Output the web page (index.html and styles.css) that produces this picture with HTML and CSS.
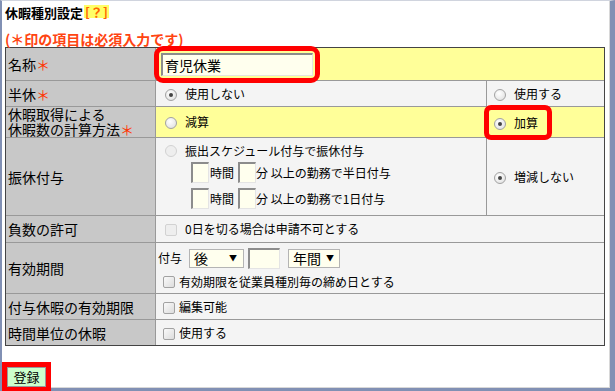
FILE: index.html
```html
<!DOCTYPE html>
<html lang="ja">
<head>
  <meta charset="UTF-8">
  <title>休暇種別設定</title>
  <link rel="stylesheet" href="styles.css">
</head>
<body>
  <div class="window">
    <h1 class="title">休暇種別設定<span class="help">[？]</span></h1>
    <p class="note">(＊印の項目は必須入力です)</p>

    <table class="form">
      <colgroup>
        <col class="c-label">
        <col class="c-main">
        <col class="c-side">
      </colgroup>
      <tr class="r-name hl">
        <th>名称<span class="req">＊</span></th>
        <td colspan="2" class="name-cell"><span class="mark-input"><input type="text" class="text name" value="育児休業"></span></td>
      </tr>
      <tr class="r-half">
        <th>半休<span class="req">＊</span></th>
        <td class="main"><span class="radio on"></span>使用しない</td>
        <td class="side"><span class="radio"></span>使用する</td>
      </tr>
      <tr class="r-calc hl">
        <th class="two">休暇取得による<br>休暇数の計算方法<span class="req">＊</span></th>
        <td class="main"><span class="radio"></span>減算</td>
        <td class="side mark-cell"><span class="mark"><span class="radio on"></span>加算</span></td>
      </tr>
      <tr class="r-sub">
        <th>振休付与</th>
        <td class="main">
          <div class="line first"><span class="radio off"></span>振出スケジュール付与で振休付与</div>
          <div class="line indent"><input type="text" class="text tiny"><span class="unit">時間</span><input type="text" class="text tiny"><span>分 以上の勤務で半日付与</span></div>
          <div class="line indent"><input type="text" class="text tiny"><span class="unit">時間</span><input type="text" class="text tiny"><span>分 以上の勤務で1日付与</span></div>
        </td>
        <td class="side"><span class="radio on"></span>増減しない</td>
      </tr>
      <tr class="r-neg">
        <th>負数の許可</th>
        <td colspan="2" class="main"><span class="check off"></span>0日を切る場合は申請不可とする</td>
      </tr>
      <tr class="r-term">
        <th>有効期間</th>
        <td colspan="2" class="wide">
          <div class="line">付与<span class="select s-after">後<i>▼</i></span><input type="text" class="text num"><span class="select s-unit">年間<i>▼</i></span></div>
          <div class="line second"><span class="check"></span>有効期限を従業員種別毎の締め日とする</div>
        </td>
      </tr>
      <tr class="r-edit">
        <th>付与休暇の有効期限</th>
        <td colspan="2" class="wide"><span class="check"></span>編集可能</td>
      </tr>
      <tr class="r-hour">
        <th>時間単位の休暇</th>
        <td colspan="2" class="wide"><span class="check"></span>使用する</td>
      </tr>
    </table>

    <div class="actions">
      <button type="button" class="submit">登録</button>
    </div>
  </div>
</body>
</html>
```

FILE: styles.css
```css
/* 休暇種別設定 */
body {
  margin: 0;
  font-family: "Noto Sans CJK JP", "Noto Sans", sans-serif;
  color: #000;
}

.window {
  box-sizing: border-box;
  width: 615px;
  height: 391px;
  padding: 4px 0 0 3px;
  background: #fff;
  border-top: 1px solid #d0d4de;
  border-left: 2px solid #8190b4;
  border-right: 5px solid #8190b4;
  border-bottom: 3px solid #8190b4;
  box-shadow: inset -1px -1px 0 #d8d8d8;
}

.title {
  margin: 0;
  font-size: 13px;
  line-height: 16px;
  font-weight: bold;
}

.help {
  display: inline-block;
  margin-left: 1px;
  padding: 0 1px;
  background: #ffff66;
  color: #ff6600;
  font-size: 13px;
  line-height: 13px;
  vertical-align: 1px;
}

.note {
  margin: 10px 0 0;
  font-size: 14px;
  line-height: 16px;
  font-weight: bold;
  color: #ff4411;
}

.req {
  color: #ff3300;
}

/* 表 */
.form {
  width: 600px;
  table-layout: fixed;
  border-collapse: separate;
  border-spacing: 0;
  border: 1px solid #444;
}

.c-label { width: 150px; }
.c-main { width: 331px; }

.form th,
.form td {
  padding: 0;
  border-right: 1px solid #999;
  border-bottom: 1px solid #999;
}

.form tr > :last-child { border-right: 0; }
.form tr:last-child > * { border-bottom: 0; }

.form th {
  padding-left: 2px;
  background: #c8c8c8;
  font-size: 14px;
  font-weight: normal;
  line-height: 16px;
  text-align: left;
}

.form th.two { line-height: 15px; }

.form td {
  background: #f4f4f4;
  font-size: 12px;
  line-height: 14px;
}

.form tr.hl td { background: #ffff99; }

.r-name { height: 33px; }
.r-half { height: 26px; }
.r-calc { height: 31px; }
.r-sub { height: 78px; }
.r-neg { height: 27px; }
.r-term { height: 51px; }
.r-edit { height: 26px; }
.r-hour { height: 25px; }

td.main { padding-left: 9px; }
td.side { padding-left: 7px; }
td.wide { padding-left: 2px; }
td.name-cell { padding-left: 5px; }
td.mark-cell { padding-left: 2px; }

.line {
  display: flex;
  align-items: center;
}

.line.first { height: 14px; margin-bottom: 4px; }
.line.indent { padding-left: 26px; margin-bottom: 5px; }
.line.indent:last-child { margin-bottom: 0; }
.line.second { margin-top: 6px; }

.unit { margin: 0 4px 0 1px; }

/* 入力欄 */
.text {
  box-sizing: border-box;
  margin: 0;
  padding: 0 2px;
  background: #ffffee;
  border-style: solid;
  border-width: 2px 1px 1px 2px;
  border-color: #8c8c8c #e4e4e4 #e4e4e4 #8c8c8c;
  font: 14px "Noto Sans CJK JP", sans-serif;
  outline: none;
}

.name {
  width: 152px;
  height: 23px;
  vertical-align: middle;
}

.tiny {
  width: 18px;
  height: 21px;
}

.num {
  width: 32px;
  height: 21px;
  margin: 0 8px 0 4px;
}

.select {
  box-sizing: border-box;
  display: inline-flex;
  align-items: center;
  justify-content: space-between;
  height: 19px;
  padding: 0 6px 0 4px;
  background: #ffffee;
  border: 1px solid #b4b4b4;
  font-size: 14px;
}

.select i {
  font-style: normal;
  font-size: 8px;
}

.s-after { width: 55px; margin-left: 7px; }
.s-unit { width: 52px; padding-right: 5px; }

/* ラジオ・チェック */
.radio,
.check {
  box-sizing: border-box;
  display: inline-block;
  position: relative;
  flex: none;
  width: 12px;
  height: 12px;
  margin-right: 8px;
  vertical-align: -2px;
  border: 1px solid #a2a2a2;
  background: radial-gradient(circle at 40% 35%, #fff, #dcdcdc);
}

.radio { border-radius: 50%; }

.radio.on::after {
  content: "";
  position: absolute;
  left: 3px;
  top: 3px;
  width: 4px;
  height: 4px;
  border-radius: 50%;
  background: #444;
}

.radio.off,
.check.off {
  border-color: #d2d2d2;
  background: #eee;
}

.check {
  border-radius: 2px;
  background: linear-gradient(135deg, #fafafa, #dcdcdc);
}

.wide .check { margin-left: 5px; margin-right: 4px; }

/* 強調枠 */
.mark-input {
  display: inline-block;
  border-radius: 2px;
  outline: 5px solid #ff0000;
  outline-offset: 2px;
  line-height: 0;
}

.mark {
  display: inline-block;
  padding: 6px 9px 5px 5px;
  border-radius: 2px;
  outline: 5px solid #ff0000;
}

.actions {
  margin: 17px 0 0 2px;
}

.submit {
  height: 20px;
  width: 39px;
  padding: 0;
  background: #ccffcc;
  border: 1px solid #999;
  font: 13px "Noto Sans CJK JP", sans-serif;
  line-height: 16px;
  outline: 5px solid #ff0000;
  border-radius: 0;
}
```
